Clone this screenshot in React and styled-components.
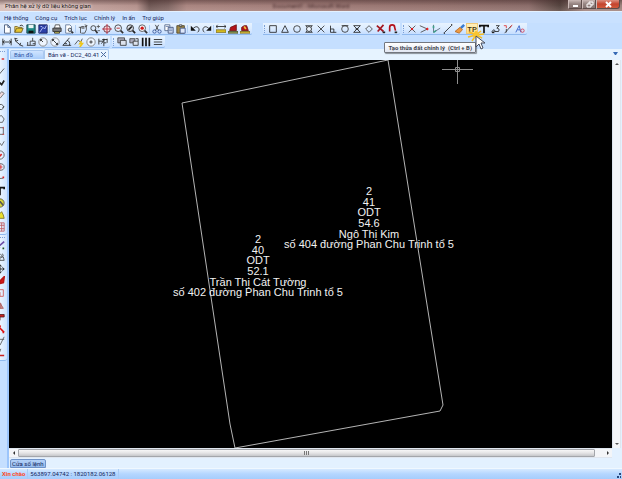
import React, { useState } from 'react';
import styled, { createGlobalStyle, css } from 'styled-components';

const GlobalStyle = createGlobalStyle`
    * {
        box-sizing: border-box;
    }

    body {
        margin: 0;
        background: #c5dfff;
        font-family: Roboto, "Liberation Sans", sans-serif;
        font-size: 6px;
        color: #14265c;
    }

    button {
        font: inherit;
        color: inherit;
        padding: 0;
        border: 0;
        background: none;
    }
`

const Window = styled.div`
    display: flex;
    flex-direction: column;
    height: 100vh;
    overflow: hidden;
    background: #c5dfff;
`

const TitleBar = styled.header`
    display: grid;
    grid-template-columns: 1fr auto 1fr;
    flex: none;
    height: 11px;
    background:
        linear-gradient(rgba(60, 35, 35, 0.45), transparent 50%, rgba(255, 230, 225, 0.15)),
        linear-gradient(90deg, #d6bfba, #c3a49f 11%, #b3918c 22%, #6f5855 24%, #7d6461 27%, #a98580 30%, #a17d79 45%, #95736f 70%, #8a6c69 85%, #55443f 90%, #9d827d 94%);
`

const Title = styled.h1`
    margin: 0;
    padding-left: 5px;
    font-size: 6px;
    font-weight: 400;
    line-height: 11px;
    color: #1a1212;
    white-space: nowrap;
    text-shadow: 0 0 3px #fff, 0 0 4px #f5e5e2;
`

const BehindTitle = styled.span`
    font-size: 6px;
    line-height: 12px;
    color: rgba(40, 18, 20, 0.8);
    filter: blur(1px);
`

const WindowButtons = styled.div`
    display: flex;
    justify-content: flex-end;
    height: 9px;
    padding-right: 2px;
`

const WindowButton = styled.button`
    display: flex;
    align-items: center;
    justify-content: center;
    width: ${props => props.$close ? '24px' : '14px'};
    border: 1px solid #5d4c4a;
    border-top: 0;
    border-left-color: #cdbcb9;
    background: linear-gradient(#c9b8b5, #948380 50%, #857370);

    ${props => props.$close && css`
        background: linear-gradient(#dd8f80, #c4442e 50%, #cf5a3c);
        border-radius: 0 0 3px 0;
    `}

    svg {
        flex: none;
        width: 11px;
        height: 7px;
    }
`

const MenuBar = styled.nav`
    display: flex;
    flex: none;
    gap: 7px;
    height: 12px;
    padding-left: 4px;
    border-top: 1px solid #e4f1ff;
    background: #c9e1ff;
`

const MenuItem = styled.button`
    line-height: 11px;
    white-space: nowrap;
`

const ToolRow = styled.div`
    display: flex;
    flex: none;
    gap: 2px;
    height: 13px;
    padding-bottom: 1px;
`

const Toolbar = styled.div`
    display: flex;
    align-items: center;
    height: 12px;
    margin-right: ${props => props.$apart ? '9px' : '0'};
    padding: 0 1px;
    border-bottom: 1px solid #8fb9ee;
    border-radius: 0 0 2px 0;
    background: linear-gradient(#e8f3ff, #dcecff 50%, #c6deff);
`

const Handle = styled.span`
    width: 3px;
    height: 8px;
    border-left: 1px dotted #7b9fd4;
`

const Separator = styled.span`
    width: 1px;
    height: 8px;
    margin-right: 1px;
    background: #b0cff5;
`

const ToolButton = styled.button`
    position: relative;
    display: flex;
    align-items: center;
    justify-content: center;
    flex: none;
    width: 12px;
    height: 11px;

    ${props => props.$active && css`
        background: linear-gradient(#fff2c4, #ffdc7b);
        box-shadow: inset 0 0 0 1px #efc878;
    `}
`

const ToolIcon = styled.svg`
    flex: none;
    width: 10px;
    height: 10px;
`

const Tooltip = styled.span`
    position: absolute;
    top: 19px;
    right: 2px;
    padding: 0 3px;
    border: 1px solid #72767e;
    border-radius: 1px;
    background: linear-gradient(#fff, #e2e7f2);
    box-shadow: 1px 1px 1px rgba(0, 0, 0, 0.4);
    color: #42454f;
    font-size: 6px;
    font-weight: 700;
    line-height: 9px;
    white-space: pre;
    z-index: 2;
`

const Pointer = styled.svg`
    position: absolute;
    top: 4px;
    left: 1px;
    width: 20px;
    height: 24px;
    z-index: 3;
`

const Workspace = styled.div`
    display: flex;
    flex: 1;
    min-height: 0;
`

const SideTools = styled.aside`
    display: flex;
    flex: none;
    flex-direction: column;
    width: 9px;
    border-right: 2px solid #9cc5fb;
`

const SideBar = styled.div`
    display: flex;
    flex-direction: column;
    align-items: flex-end;
    overflow: hidden;
    padding: 2px 2px 1px 0;
    border-bottom: 1px solid #8fb9ee;
    border-radius: 0 0 3px 0;
    background: linear-gradient(90deg, #e9f4ff, #cfe4ff);
`

const SideHandle = styled.span`
    width: 5px;
    height: 2px;
    border-top: 1px dotted #7b9fd4;
`

const SideButton = styled.button`
    display: flex;
    flex: none;
    align-items: center;
    width: 10px;
    height: 12px;
`

const Documents = styled.main`
    display: flex;
    flex: 1;
    flex-direction: column;
    min-width: 0;
    background: #e3f1ff;
`

const TabStrip = styled.div`
    display: flex;
    flex: none;
    align-items: flex-end;
    height: 11px;
    padding: 0 4px 1px 1px;
    background: #e6f3ff;
`

const Tab = styled.button`
    display: flex;
    align-items: center;
    justify-content: space-between;
    width: ${props => props.$wide ? '65px' : '34px'};
    height: ${props => props.$active ? '10px' : '9px'};
    padding: 0 2px 0 3px;
    border: 1px solid #a9c8ef;
    border-bottom: 0;
    border-radius: 2px 2px 0 0;
    background: ${props => props.$active ? '#e9f4ff' : 'linear-gradient(#cfe4ff, #a9cdfa)'};
    color: ${props => props.$active ? '#14265c' : '#2c55a5'};
    line-height: 8px;
    white-space: nowrap;

    svg {
        flex: none;
        width: 5px;
        height: 5px;
    }
`

const TabMenu = styled.button`
    display: flex;
    margin-left: auto;
    padding-bottom: 4px;

    svg {
        width: 5px;
        height: 3px;
    }
`

const Viewport = styled.div`
    display: grid;
    grid-template-columns: 1fr 9px;
    grid-template-rows: 1fr 10px;
    flex: 1;
    min-height: 0;
    margin-right: 1px;
`

const Drawing = styled.div`
    position: relative;
    overflow: hidden;
    background: #000;
    color: #f2f2f2;

    > svg {
        position: absolute;
        top: 0;
        left: 0;
        overflow: visible;
    }
`

const ParcelLabel = styled.div`
    position: absolute;
    left: ${props => props.$x}px;
    top: ${props => props.$y}px;
    display: grid;
    grid-template-rows: repeat(6, 1fr);
    height: 64px;
    transform: translateX(-50%);
    font-family: "Liberation Sans", Arial, sans-serif;
    font-size: 11px;
    line-height: 10px;
    text-align: center;
    white-space: nowrap;
`

const ScrollBar = styled.div`
    display: flex;
    flex-direction: ${props => props.$vertical ? 'column' : 'row'};
    justify-content: space-between;
    background: #f3f5f8;
    border: 1px solid #dfe6ef;
    border-width: ${props => props.$vertical ? '0 1px' : '1px 0'};
`

const ScrollButton = styled.button`
    display: flex;
    align-items: center;
    justify-content: center;
    width: ${props => props.$vertical ? '7px' : '9px'};
    height: 8px;

    svg {
        width: 4px;
        height: 4px;
    }
`

const Thumb = styled.div`
    display: flex;
    align-items: center;
    justify-content: center;
    flex: 1;
    margin-right: 8px;
    border: 1px solid #a3a6ab;
    border-radius: 1px;
    background: linear-gradient(#f7f7f7, #e4e4e6 50%, #c6c7ca);

    svg {
        width: 5px;
        height: 4px;
    }
`

const CommandBar = styled.div`
    display: flex;
    flex: none;
    align-items: flex-end;
    height: 10px;
    padding-left: 1px;
    background: #e3f1ff;
`

const CommandTab = styled.button`
    height: 9px;
    padding: 0 1px;
    border: 1px solid #6f93c9;
    border-radius: 2px 2px 0 0;
    background: linear-gradient(#b5d2f8, #95bbee);
    line-height: 7px;
`

const StatusBar = styled.footer`
    display: flex;
    flex: none;
    align-items: center;
    height: 11px;
    padding-left: 2px;
    border-top: 1px solid #f0f8ff;
    background: linear-gradient(#d5e9ff, #b4d6ff 50%, #a6cdfc);
    line-height: 10px;
`

const Greeting = styled.span`
    color: #ff4a1c;
    font-weight: 700;
`

const Coordinates = styled.span`
    margin-left: 2px;
    padding: 0 2px;
    border: 1px solid #a8cbf5;
    border-width: 0 1px;
`

const Grip = styled.svg`
    width: 4px;
    height: 6px;
    margin: 3px 1px 0 auto;
`

// All icons are drawn on a 12 x 12 grid
const icons = {
    new: <path d="M3 1h4l3 3v7H3zM7 1v3h3" fill="#fff" stroke="#3c5276" />,
    open: <><path d="M1 10V3h3l1 1h4v2" fill="#f5dc6c" stroke="#7c6820" /><path d="M1 10l2-5h8l-2 5z" fill="#e6c532" stroke="#6a5a1c" /><path d="M7 2q3-2 4 1" stroke="#222" /></>,
    save: <><path d="M1 1h10v10H1z" fill="#1c8a86" stroke="#133b47" /><path d="M3 1h6v4H3z" fill="#e8f4f4" /><path d="M3 8h6v3H3z" fill="#111" /></>,
    image: <><path d="M1 1h10v10H1z" fill="#2b3fa8" stroke="#171e55" /><path d="M2 10l4-6 2 2 2-4M3 3h2" stroke="#c7d0ff" /></>,
    print: <><path d="M3 5l1-4h5l1 4z" fill="#fff" stroke="#444" /><path d="M1 5h10v4H1z" fill="#777" stroke="#333" /><path d="M3 9h6v2H3z" fill="#c9c14f" stroke="#333" /></>,
    preview: <><path d="M2 1h5l2 2v8H2z" fill="#fff" stroke="#5c7396" /><circle cx="7" cy="7" r="2" fill="#cfe4fb" stroke="#333" /><path d="M9 9l2 2" stroke="#333" strokeWidth="2" /></>,
    hand: <path d="M1 4h3M3 11V4l2-1v3M5 3h2v3M8 3h2v4l-2 4H4M8 1l3 1-2 2" stroke="#444" />,
    zoomInOut: <><circle cx="4" cy="5" r="3" fill="#dcecff" stroke="#333" /><path d="M6 7l3 4" stroke="#333" strokeWidth="2" /><path d="M8 3h4M10 1v4M9 8h3" stroke="#555" /></>,
    zoomAll: <><circle cx="6" cy="6" r="4" fill="#f2dce0" stroke="#5a2734" /><path d="M6 0v12M0 6h12" stroke="#c02234" /></>,
    zoomWindow: <><circle cx="5" cy="5" r="4" fill="#e6f1ff" stroke="#333" /><path d="M8 8l3 3" stroke="#333" strokeWidth="2" /><path d="M3 5h4" stroke="#b01010" /></>,
    zoomBack: <><circle cx="5" cy="5" r="4" fill="#d8dce4" stroke="#222" /><path d="M8 8l3 3M3 7l4-4" stroke="#222" strokeWidth="2" /></>,
    zoomPoint: <><circle cx="5" cy="5" r="4" fill="#f5f8ff" stroke="#444" /><circle cx="5" cy="5" r="2" fill="#d01818" /><path d="M8 8l3 3" stroke="#333" strokeWidth="2" /></>,
    cut: <><path d="M4 1l4 7M8 1L4 8" stroke="#333" /><circle cx="3" cy="9" r="2" stroke="#314f96" /><circle cx="9" cy="9" r="2" stroke="#314f96" /></>,
    copy: <><path d="M1 1h6v7H1z" fill="#fff" stroke="#4b5f86" /><path d="M5 4h6v7H5z" fill="#d5e1f6" stroke="#3a4c75" /><path d="M6 6h4M6 8h4M2 3h4" stroke="#6d83ad" /></>,
    paste: <><path d="M1 2h9v9H1z" fill="#a28a45" stroke="#4d4326" /><path d="M4 1h3v2H4z" fill="#ddd" stroke="#444" /><path d="M5 5h6v6H5z" fill="#dfe8fa" stroke="#39508c" /></>,
    undo: <><path d="M4 5q5-4 7 1 0 3-2 4" stroke="#222" /><path d="M1 2v6h6z" fill="#111" /></>,
    redo: <><path d="M8 5Q3 1 1 6q0 3 2 4" stroke="#333" /><path d="M11 2v6H5z" fill="#111" /></>,
    ruler: <><path d="M0 3h12M2 1L0 3l2 2M10 1l2 2-2 2" stroke="#222" /><path d="M0 7h12v3H0z" fill="#e3c722" stroke="#77681a" /></>,
    areaRed: <><path d="M2 8l1-4 7-3v7z" fill="#b31219" stroke="#6d1515" /><path d="M0 9h12v2H0z" fill="#94a154" stroke="#4b5531" /></>,
    areaGold: <><path d="M2 8V4l3-2h3l2 6z" fill="#b31219" stroke="#6d1515" /><path d="M5 3l2 3" stroke="#f1c43a" strokeWidth="2" /><path d="M0 9h12v2H0z" fill="#dfc438" stroke="#7d6c1c" /></>,
    square: <path d="M2 2h8v8H2z" stroke="#222" />,
    triangle: <path d="M6 2l4 8H2z" stroke="#222" />,
    circle: <circle cx="6" cy="6" r="4" stroke="#333" />,
    center: <><path d="M2 2l8 8M10 2l-8 8M2 2h8M2 10h8" stroke="#333" /><circle cx="6" cy="6" r="3" fill="#eef6ff" stroke="#222" /></>,
    cross: <path d="M2 2l8 8M10 2l-8 8" stroke="#333" />,
    perpendicular: <path d="M3 2v8h7M3 6h4v4" stroke="#222" />,
    tangent: <><path d="M2 2h8" stroke="#222" /><circle cx="6" cy="6" r="4" stroke="#333" /></>,
    nearest: <path d="M2 2h8l-8 8h8zM4 6h4" stroke="#222" />,
    diamond: <path d="M6 2l4 4-4 4-4-4z" stroke="#444" />,
    snapOff: <><path d="M1 2l8 7M9 1L2 9" stroke="#a31822" strokeWidth="2" /><path d="M8 10h3" stroke="#222" strokeWidth="2" /></>,
    magnet: <><path d="M2 9V4q0-3 3-3t3 3l1 4" stroke="#b3121c" strokeWidth="2" /><path d="M8 10h3" stroke="#222" strokeWidth="2" /></>,
    crossRed: <><path d="M2 2l8 8M10 2l-8 8" stroke="#444" /><circle cx="6" cy="6" r="1" fill="#e11" stroke="#e11" /></>,
    vertexRed: <><path d="M1 2l9 4-8 4" stroke="#444" /><circle cx="10" cy="6" r="1" fill="#e11" stroke="#e11" /></>,
    angle: <><path d="M3 1v9l8-5" stroke="#567" /><path d="M3 2v3M3 10l3-2" stroke="#3fa08a" strokeWidth="2" /></>,
    line: <><path d="M2 10l8-8" stroke="#222" /><path d="M1 11h1M10 1h1" stroke="#000" strokeWidth="2" /></>,
    brush: <><path d="M11 1L7 5" stroke="#387bd0" strokeWidth="3" /><path d="M6 4l3 3-4 4-5-2z" fill="#ee9a42" stroke="#b36a25" /></>,
    parcel: <text x="6" y="9" fontSize="9" fontWeight="500" textAnchor="middle" fill="#3c3214">TP</text>,
    text: <path d="M1 4V2h10v2M6 2v9" stroke="#111" strokeWidth="2" />,
    bendThree: <><path d="M1 9q3-4 4 0M6 2h4L7 5q4 0 2 4H4" stroke="#222" /><path d="M1 10h3" stroke="#222" strokeWidth="2" /></>,
    slashRed: <><path d="M2 11l8-9" stroke="#333" /><path d="M1 2h3v3M8 5l3-4" stroke="#d33" /><path d="M4 6v4" stroke="#333" /></>,
    annotate: <><path d="M1 10l4-8 2 8M3 7h3" stroke="#2958c5" /><circle cx="9" cy="8" r="2" stroke="#d63a4e" /></>,
    distance: <path d="M1 2v8M11 2v8M1 6h10M3 4L1 6l2 2M9 4l2 2-2 2" stroke="#222" />,
    aligned: <path d="M1 1l1 4 6 5 3 1M5 4l-3 1M8 7l-1 3M1 2h3" stroke="#222" />,
    ordinate: <path d="M1 10h4V5h3V1M5 10h6V5H8M2 6v4M8 8h3" stroke="#333" />,
    radius: <><circle cx="6" cy="6" r="5" fill="#eef5ff" stroke="#777" /><path d="M6 6L3 3M3 5V3h2" stroke="#222" /></>,
    diameter: <><circle cx="6" cy="6" r="5" fill="#eef5ff" stroke="#888" /><path d="M3 3l6 6M3 5V3h2M9 7v2H7" stroke="#222" /></>,
    angular: <path d="M9 1L1 10h10M6 4q4 1 3 6M3 8h3" stroke="#222" />,
    leader: <><path d="M1 9l4-5 3 2 2-4" stroke="#444" /><path d="M9 5l-2 3h3l-3 4" stroke="#efc619" strokeWidth="2" /></>,
    target: <><circle cx="6" cy="6" r="5" fill="#edf5ff" stroke="#777" /><path d="M4 6h4M6 4v4" stroke="#222" /></>,
    dimEdit: <path d="M1 2v7M1 5h5M7 2v5M11 2v5M4 8l4-5M7 11V7h3M5 3h6" stroke="#222" />,
    layers: <><path d="M1 1h8v6H1z" fill="#aab" stroke="#444" /><path d="M4 4h7v6H4z" fill="#dde3ee" stroke="#333" /></>,
    layerMove: <><path d="M1 2h6v5H1z" fill="#aab" stroke="#444" /><path d="M5 5h6v5H5zM8 2h3v3" fill="#dde3ee" stroke="#333" /></>,
    columns: <path d="M2 1v10M6 1v10M10 1v10" stroke="#111" strokeWidth="2" />,
    rows: <path d="M1 3h10M1 6h10M1 9h10" stroke="#222" />,
    dotRed: <path d="M8 6h3" stroke="#d33" strokeWidth="2" />,
    sideLine: <path d="M2 8l3 2 6-7" stroke="#444" />,
    sideRay: <path d="M3 10l3-4 2 2 3-5" stroke="#222" strokeWidth="2" />,
    eraser: <path d="M2 9l6-7 3 2-5 6z" fill="#f0d9dd" stroke="#666" />,
    arc: <path d="M3 3h5q5 3 0 6H3M9 7l2-2" stroke="#444" />,
    pentagon: <path d="M2 3l6-1 3 4-2 4H2z" stroke="#555" />,
    rect: <><path d="M1 2h9v8H1z" stroke="#555" /><path d="M10 1v2M9 10h2" stroke="#d33" /></>,
    wave: <path d="M1 4l4 1 3 4 3-5" stroke="#555" />,
    circleRed: <><circle cx="6" cy="6" r="5" stroke="#555" /><path d="M5 8l3-3" stroke="#d22" strokeWidth="2" /></>,
    ellipseRed: <><ellipse cx="6" cy="6" rx="5" ry="4" stroke="#555" /><path d="M7 3v6M5 6h4" stroke="#d22" /></>,
    curve: <><path d="M1 9q4-5 9-4" stroke="#555" /><path d="M9 4h2" stroke="#d22" strokeWidth="2" /></>,
    globe: <><circle cx="6" cy="6" r="5" fill="#d9d83a" stroke="#555" /><path d="M5 3l5 6" stroke="#555" strokeWidth="2" /></>,
    bulb: <path d="M4 10V6l4-4 2 4 1 4z" fill="#e8df2f" stroke="#777025" />,
    hatch: <path d="M1 1h10v10H1zM1 4h10M1 8h10M5 1v10M8 1v10" stroke="#bd5a62" />,
    pencil: <><path d="M4 8l7-6" stroke="#6b4ba5" strokeWidth="2" /><path d="M4 9l2 1M9 10h2" stroke="#252" strokeWidth="2" /></>,
    copyObject: <path d="M6 2l3 3-3 3M5 6h5l1 4H6zM9 2l1 3" stroke="#444" />,
    move: <path d="M6 1v10M1 6h10M4 3l2-2 2 2M4 9l2 2 2-2M9 4l2 2-2 2" stroke="#111" />,
    paint: <path d="M11 1L7 5l-1 4 4-1z" fill="#e11919" stroke="#b91616" strokeWidth="2" />,
    frame: <path d="M3 2h7v8H3zM6 5v5" stroke="#c55" />,
    mirror: <path d="M5 2l5 8H5zM7 4v6" fill="#d2a3a3" stroke="#a55" />,
    flag: <path d="M4 3h7v3H6zM6 6v4" fill="#c22" stroke="#522" />,
    wand: <path d="M5 4l6 6M4 2l3 1M9 10h2" stroke="#d11" strokeWidth="2" />,
    trim: <path d="M2 4h9M11 1L6 11" stroke="#555" />,
    extend: <><path d="M7 1L4 9" stroke="#555" /><path d="M4 9h7" stroke="#c22" strokeWidth="2" /></>,
}

function Icon({ name }) {
    return (
        <ToolIcon viewBox="0 0 12 12" fill="none" aria-hidden="true">{icons[name]}</ToolIcon>
    );
}

const menus = ['Hệ thống', 'Công cụ', 'Trích lục', 'Chỉnh lý', 'In ấn', 'Trợ giúp']

const standardTools = ['new', 'open', 'save', 'image', '|', 'print', 'preview', '|', 'hand', 'zoomInOut', 'zoomAll',
    'zoomWindow', 'zoomBack', 'zoomPoint', '|', 'cut', 'copy', 'paste', '|', 'undo', 'redo', '|', 'ruler', 'areaRed', 'areaGold']
const snapTools = ['square', 'triangle', 'circle', 'center', 'cross', 'perpendicular', 'tangent', 'nearest', 'diamond', 'snapOff', 'magnet']
const parcelTools = ['crossRed', 'vertexRed', 'angle', 'line', 'brush', 'parcel', 'text', 'bendThree', 'slashRed', 'annotate']
const dimensionTools = ['distance', 'aligned', 'ordinate', 'radius', 'diameter', 'angular', 'leader', 'target', 'dimEdit']
const layerTools = ['layers', 'layerMove', 'columns', 'rows']
const drawTools = ['dotRed', 'sideLine', 'sideRay', 'eraser', 'arc', 'pentagon', 'rect', 'wave', 'circleRed', 'ellipseRed',
    'curve', 'text', 'globe', 'bulb', 'hatch']
const editTools = ['pencil', 'copyObject', 'move', 'paint', 'frame', 'mirror', 'flag', 'wand', 'trim', 'extend']

const parcels = [
    { x: 360, y: 126, lines: ['2', '41', 'ODT', '54.6', 'Ngô Thị Kim', 'số 404 đường Phan Chu Trinh tổ 5'] },
    { x: 249, y: 174, lines: ['2', '40', 'ODT', '52.1', 'Trần Thị Cát Tường', 'số 402 đường Phan Chu Trinh tổ 5'] },
]

function ToolGroup({ tools, handle, apart }) {
    return (
        <Toolbar role="toolbar" $apart={apart}>
            {handle && <Handle />}
            {tools.map((tool, i) => {
                if (tool === '|') return <Separator key={i} />
                return (
                    <ToolButton key={i} type="button" aria-label={tool} $active={tool === 'parcel'}>
                        <Icon name={tool} />
                        {tool === 'parcel' && (
                            <>
                                <Tooltip role="tooltip">Tạo thửa đất chỉnh lý  (Ctrl + B)</Tooltip>
                                <Pointer viewBox="0 0 20 24" fill="none" aria-hidden="true">
                                    <path d="M9 8V4M9 8l5-4M9 8l8-1M9 8l6 3M9 8l1 6M9 8l-4 6M9 8l-8 2M9 8L2 5" stroke="#f5bd24" strokeWidth="1.500" />
                                    <circle cx="9" cy="8" r="3" fill="#f9c630" />
                                    <path d="M9 9v11l3-3 2 5 2-1-2-5h4z" fill="#fff" stroke="#444b5c" />
                                </Pointer>
                            </>
                        )}
                    </ToolButton>
                )
            })}
        </Toolbar>
    );
}

function App() {
    const [tab, setTab] = useState(1)

    return (
        <Window>
            <GlobalStyle />
            <TitleBar>
                <Title>Phân hệ xử lý dữ liệu không gian</Title>
                <BehindTitle aria-hidden="true">Document1 - Microsoft Word</BehindTitle>
                <WindowButtons>
                    <WindowButton type="button" aria-label="Minimize">
                        <svg viewBox="0 0 11 7"><path d="M3 4h5v2H3z" fill="#fff" /></svg>
                    </WindowButton>
                    <WindowButton type="button" aria-label="Restore">
                        <svg viewBox="0 0 11 7" fill="none" stroke="#fff"><path d="M5 3V1h4v3H7M3 3h4v3H3z" /></svg>
                    </WindowButton>
                    <WindowButton type="button" aria-label="Close" $close>
                        <svg viewBox="0 0 11 7"><path d="M3 1l5 5M8 1L3 6" stroke="#fff" strokeWidth="2" /></svg>
                    </WindowButton>
                </WindowButtons>
            </TitleBar>

            <MenuBar>
                {menus.map(menu => <MenuItem key={menu} type="button">{menu}</MenuItem>)}
            </MenuBar>

            <ToolRow>
                <ToolGroup tools={standardTools} apart />
                <ToolGroup tools={snapTools} handle />
                <ToolGroup tools={parcelTools} handle />
            </ToolRow>
            <ToolRow>
                <ToolGroup tools={dimensionTools} />
                <ToolGroup tools={layerTools} handle />
            </ToolRow>

            <Workspace>
                <SideTools>
                    <SideBar>
                        <SideHandle />
                        {drawTools.map(tool => (
                            <SideButton key={tool} type="button" aria-label={tool}><Icon name={tool} /></SideButton>
                        ))}
                    </SideBar>
                    <SideBar>
                        <SideHandle />
                        {editTools.map(tool => (
                            <SideButton key={tool} type="button" aria-label={tool}><Icon name={tool} /></SideButton>
                        ))}
                    </SideBar>
                </SideTools>

                <Documents>
                    <TabStrip role="tablist">
                        <Tab type="button" role="tab" $active={tab === 0} onClick={() => setTab(0)}>Bản đồ</Tab>
                        <Tab type="button" role="tab" $wide $active={tab === 1} onClick={() => setTab(1)}>
                            Bản vẽ - DC2_40.41
                            <svg viewBox="0 0 5 5"><path d="M0 0l5 5M5 0L0 5" stroke="#4b6a9e" /></svg>
                        </Tab>
                        <TabMenu type="button" aria-label="Tabs">
                            <svg viewBox="0 0 5 3"><path d="M0 0h5L3 3H2z" fill="#3569b5" /></svg>
                        </TabMenu>
                    </TabStrip>

                    <Viewport>
                        <Drawing>
                            <svg width="603" height="388" viewBox="0 0 603 388" fill="none" stroke="#b4b4b4">
                                <path d="M173 43L379 0l55 345-3 6-205 37-5-24z" />
                                {/* crosshair */}
                                <path d="M433 9.500h31M448.500 0v24M446.500 7.500h4v4h-4z" stroke="#8e8e8e" />
                            </svg>
                            {parcels.map(parcel => (
                                <ParcelLabel key={parcel.x} $x={parcel.x} $y={parcel.y}>
                                    {parcel.lines.map(line => <span key={line}>{line}</span>)}
                                </ParcelLabel>
                            ))}
                        </Drawing>
                        <ScrollBar $vertical>
                            <ScrollButton type="button" aria-label="Up" $vertical>
                                <svg viewBox="0 0 4 4"><path d="M0 3l2-2 2 2z" fill="#555" /></svg>
                            </ScrollButton>
                            <ScrollButton type="button" aria-label="Down" $vertical>
                                <svg viewBox="0 0 4 4"><path d="M0 1h4L2 3z" fill="#555" /></svg>
                            </ScrollButton>
                        </ScrollBar>
                        <ScrollBar>
                            <ScrollButton type="button" aria-label="Left">
                                <svg viewBox="0 0 4 4"><path d="M3 0v4L1 2z" fill="#333" /></svg>
                            </ScrollButton>
                            <Thumb>
                                <svg viewBox="0 0 5 4"><path d="M0 0h1v4H0zM2 0h1v4H2zM4 0h1v4H4z" fill="#777" /></svg>
                            </Thumb>
                            <ScrollButton type="button" aria-label="Right">
                                <svg viewBox="0 0 4 4"><path d="M1 0v4l2-2z" fill="#333" /></svg>
                            </ScrollButton>
                        </ScrollBar>
                    </Viewport>

                    <CommandBar>
                        <CommandTab type="button">Cửa sổ lệnh</CommandTab>
                    </CommandBar>
                </Documents>
            </Workspace>

            <StatusBar>
                <Greeting>Xin chào</Greeting>
                <Coordinates>563897.04742 : 1820182.06128</Coordinates>
                <Grip viewBox="0 0 4 6"><path d="M2 0h2v2H2zM0 3h2v2H0zM3 3h1v2H3z" fill="#28497f" /></Grip>
            </StatusBar>
        </Window>
    );
}

export default App;
